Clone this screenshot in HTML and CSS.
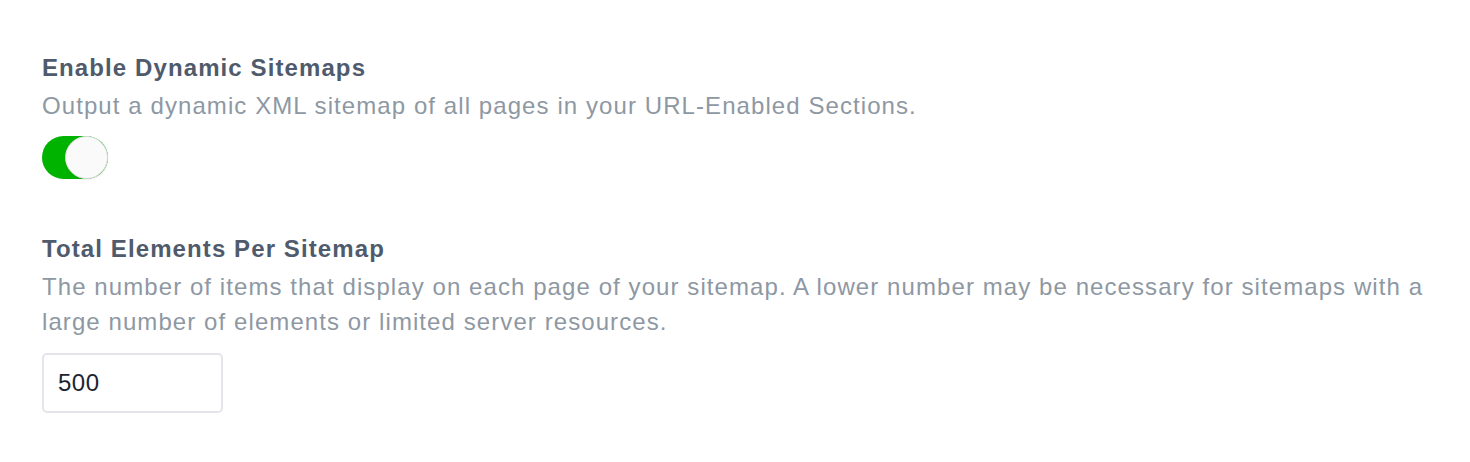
FILE: index.html
```html
<!DOCTYPE html>
<html lang="en">
<head>
<meta charset="utf-8">
<title>Sitemap settings</title>
<link rel="stylesheet" href="styles.css">
</head>
<body>
<div class="settings">
  <div class="field">
    <div class="field-label">Enable Dynamic Sitemaps</div>
    <div class="field-desc">Output a dynamic XML sitemap of all pages in your URL-Enabled Sections.</div>
    <div class="toggle on"><span class="knob"></span></div>
  </div>
  <div class="field">
    <div class="field-label">Total Elements Per Sitemap</div>
    <div class="field-desc">The number of items that display on each page of your sitemap. A lower number may be necessary for sitemaps with a large number of elements or limited server resources.</div>
    <input class="text-input" type="text" value="500">
  </div>
</div>
</body>
</html>
```
FILE: styles.css
```css
html, body {
  margin: 0;
  padding: 0;
  background: #ffffff;
}
body {
  font-family: "Liberation Sans", Arial, Helvetica, sans-serif;
}
.settings {
  padding: 50px 42px 0 42px;
  display: flex;
  flex-direction: column;
  gap: 52px;
}
.field {
  display: flex;
  flex-direction: column;
  align-items: flex-start;
}
.field-label {
  font-size: 24px;
  font-weight: bold;
  line-height: 35px;
  color: #4f5b6d;
  letter-spacing: 1.1px;
}
.field-desc {
  margin-top: 3px;
  font-size: 24px;
  line-height: 35px;
  color: #8e98a3;
  letter-spacing: 1.08px;
}
.toggle {
  margin-top: 13px;
  width: 66px;
  height: 43px;
  border-radius: 22px;
  background: #00b300;
  display: flex;
  justify-content: flex-end;
  box-sizing: border-box;
}
.knob {
  width: 43px;
  height: 43px;
  border-radius: 50%;
  background: #fafafa;
  border: 1px solid #dcdcdc;
  box-sizing: border-box;
  box-shadow: 0 1px 2px rgba(0,0,0,0.08);
}
.text-input {
  margin-top: 14px;
  width: 181px;
  height: 60px;
  box-sizing: border-box;
  border: 2px solid #e4e5ea;
  border-radius: 5px;
  padding: 0 14px;
  font-family: "Liberation Sans", Arial, Helvetica, sans-serif;
  font-size: 24px;
  letter-spacing: 0.5px;
  color: #1c2431;
  background: #fff;
  outline: none;
}
```
